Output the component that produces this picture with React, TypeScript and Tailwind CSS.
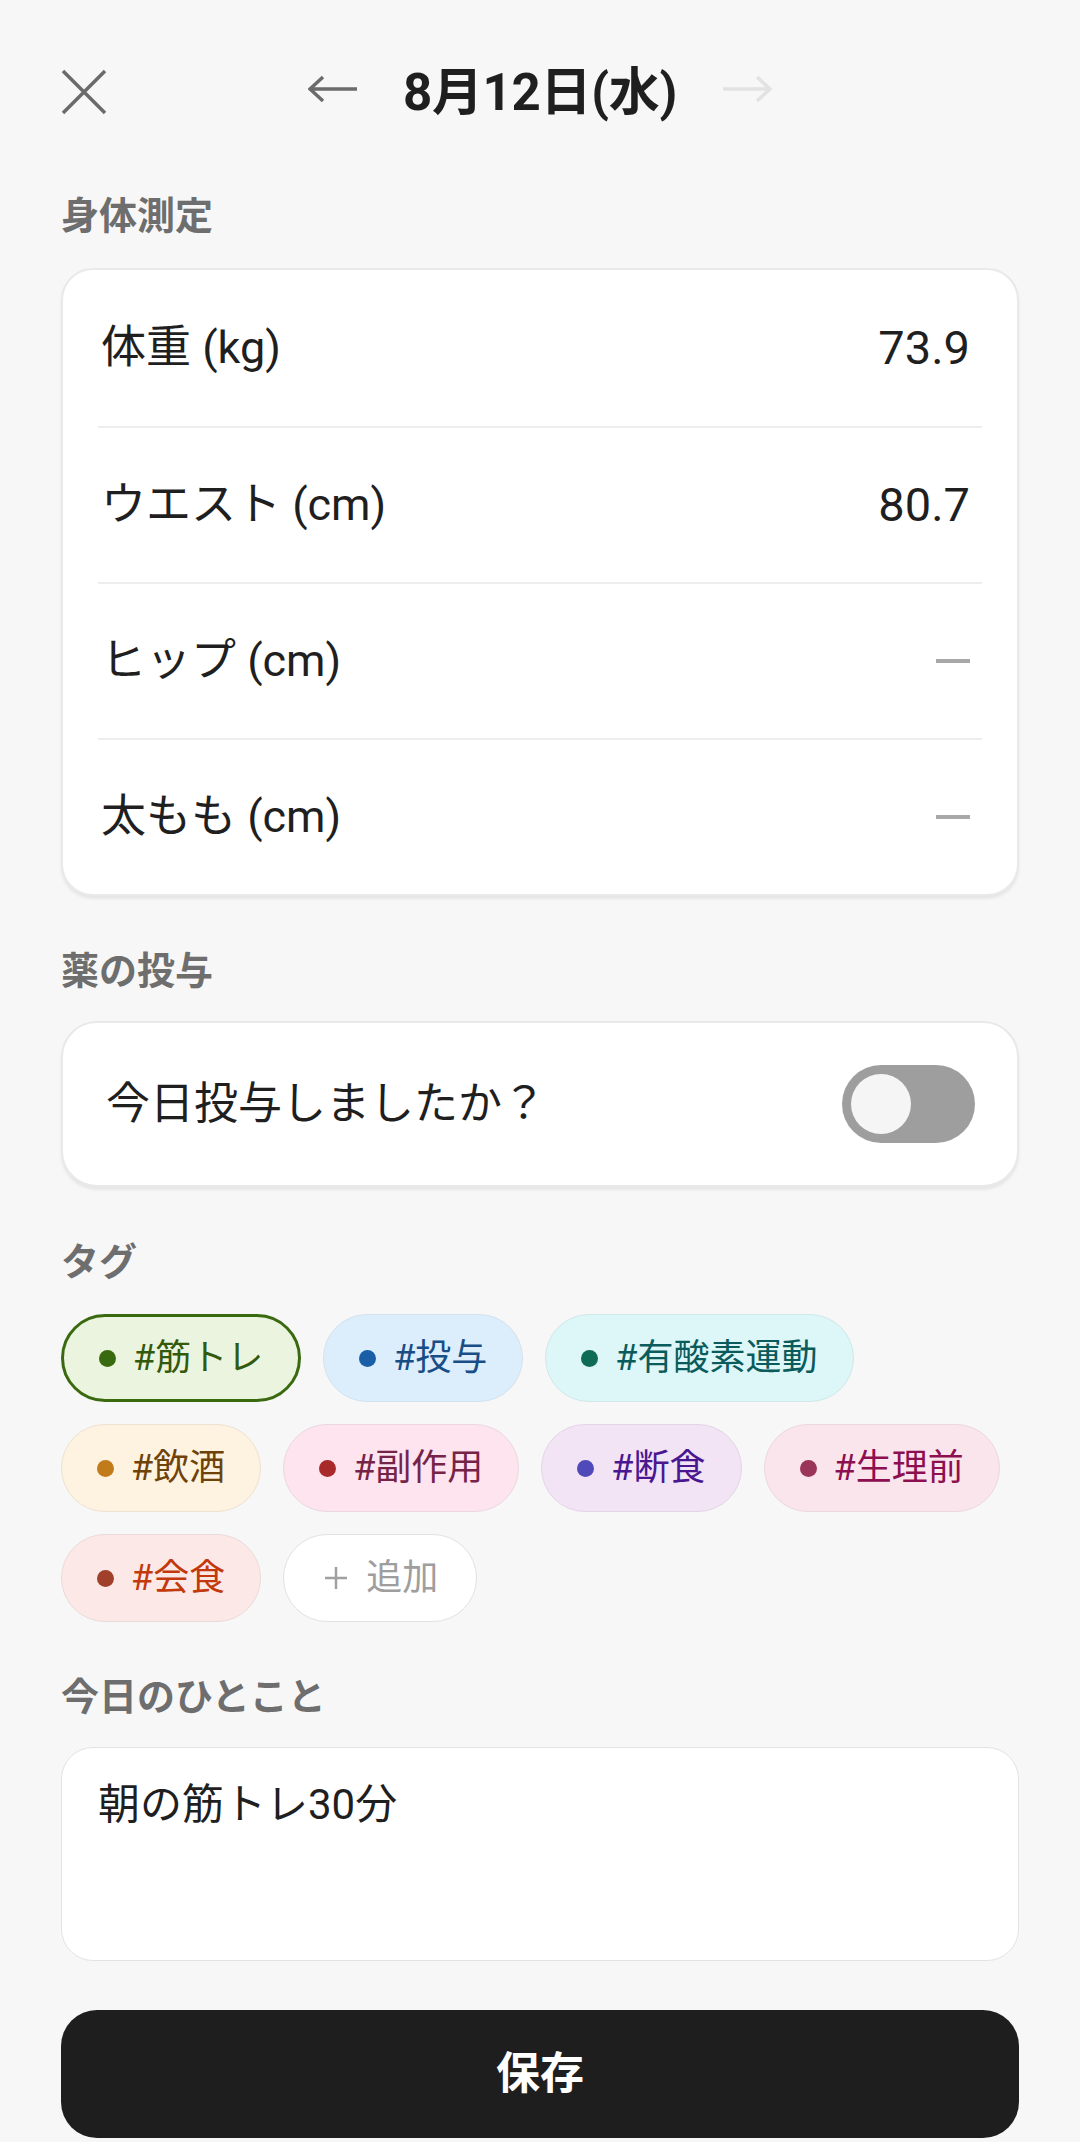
import { useState } from "react";

type Tag = {
  label: string;
  bg: string;
  border: string;
  dot: string;
  text: string;
  selected?: boolean;
};

const TAGS: Tag[] = [
  { label: "#筋トレ", bg: "bg-[#ebf4de]", border: "border-[#3a6a0f]", dot: "bg-[#3a6a0f]", text: "text-[#33590d]", selected: true },
  { label: "#投与", bg: "bg-[#dcedfb]", border: "border-[#d3e2ef]", dot: "bg-[#1a5ea8]", text: "text-[#184d86]" },
  { label: "#有酸素運動", bg: "bg-[#ddf6f7]", border: "border-[#d0e8e8]", dot: "bg-[#0e6b55]", text: "text-[#0a5b5b]" },
  { label: "#飲酒", bg: "bg-[#fef3e0]", border: "border-[#ede2cf]", dot: "bg-[#c27b1b]", text: "text-[#6e4209]" },
  { label: "#副作用", bg: "bg-[#fde4ee]", border: "border-[#ecd7df]", dot: "bg-[#a82a2a]", text: "text-[#762348]" },
  { label: "#断食", bg: "bg-[#f2e4f5]", border: "border-[#e2d5e5]", dot: "bg-[#5049b9]", text: "text-[#4a1790]" },
  { label: "#生理前", bg: "bg-[#fbe5ed]", border: "border-[#ebd7de]", dot: "bg-[#9b3459]", text: "text-[#8c0f50]" },
  { label: "#会食", bg: "bg-[#fce9e7]", border: "border-[#ebdad8]", dot: "bg-[#a0402b]", text: "text-[#c2390c]" },
];

const MEASUREMENTS = [
  { label: "体重 (kg)", value: "73.9" },
  { label: "ウエスト (cm)", value: "80.7" },
  { label: "ヒップ (cm)", value: null },
  { label: "太もも (cm)", value: null },
];

const SectionLabel = ({ children, className = "" }: { children: string; className?: string }) => (
  <div className={`h-[52px] leading-[52px] text-[38px] font-bold text-[#6e6e6e] ${className}`}>
    {children}
  </div>
);

export default function App() {
  const [taken, setTaken] = useState(false);

  return (
    <div className="min-h-screen bg-[#f7f7f7] font-[Roboto,'Noto_Sans_CJK_JP',sans-serif] text-[#1f1f1f]">
      <div className="px-[61px]">
        {/* header */}
        <header className="grid grid-cols-[1fr_auto_1fr] items-center h-[184px]">
          <button className="w-[46px] h-[46px] flex items-center justify-center">
            <svg width="46" height="46" viewBox="0 0 46 46" fill="none" stroke="#6b6b6b" strokeWidth="3.5">
              <path d="M2 2 L44 44 M44 2 L2 44" />
            </svg>
          </button>
          <div className="flex items-center gap-[45px]">
            <svg width="50" height="28" viewBox="0 0 50 28" fill="none" stroke="#6b6b6b" strokeWidth="3.5" className="-mt-[6px]">
              <path d="M2 14 H49 M15 2 L2 14 L15 26" />
            </svg>
            <div className="text-[51px] font-bold leading-none tracking-[-0.3px]">8月12日(水)</div>
            <svg width="50" height="28" viewBox="0 0 50 28" fill="none" stroke="#e2e2e2" strokeWidth="3.5" className="-mt-[6px]">
              <path d="M1 14 H48 M35 2 L48 14 L35 26" />
            </svg>
          </div>
          <div />
        </header>

        <SectionLabel className="mt-[6px]">身体測定</SectionLabel>
        <div className="mt-[26px] bg-white rounded-[32px] border-2 border-[#e9e9e9] shadow-[0_3px_3px_rgba(0,0,0,0.07)] px-[35px]">
          {MEASUREMENTS.map((m, i) => (
            <div
              key={m.label}
              className={`flex items-center justify-between h-[156px] pl-[3px] pr-[12px] ${i > 0 ? "border-t-2 border-[#eeeeee]" : ""}`}
            >
              <span className="text-[45px]">{m.label}</span>
              {m.value ? (
                <span className="text-[47px]">{m.value}</span>
              ) : (
                <span className="w-[34px] h-[4px] bg-[#a8a8a8]" />
              )}
            </div>
          ))}
        </div>

        <SectionLabel className="mt-[49px]">薬の投与</SectionLabel>
        <div className="mt-[24px] h-[166px] bg-white rounded-[36px] border-2 border-[#e9e9e9] shadow-[0_3px_3px_rgba(0,0,0,0.07)] flex items-center justify-between pl-[43px] pr-[42px]">
          <span className="text-[44px]">今日投与しましたか？</span>
          <button
            onClick={() => setTaken(!taken)}
            className={`w-[133px] h-[78px] rounded-full flex items-center px-[9px] ${taken ? "bg-[#1e1e1e] justify-end" : "bg-[#9e9e9e] justify-start"}`}
          >
            <span className="w-[60px] h-[60px] rounded-full bg-[#f5f5f5]" />
          </button>
        </div>

        <SectionLabel className="mt-[49px]">タグ</SectionLabel>
        <div className="mt-[26px] flex flex-wrap gap-[22px]">
          {TAGS.map((t) => (
            <div
              key={t.label}
              className={`h-[88px] rounded-full flex items-center gap-[17px] ${t.bg} ${t.border} ${t.selected ? "border-[3px] px-[35px]" : "border px-[35px]"}`}
            >
              <span className={`w-[17px] h-[17px] rounded-full ${t.dot}`} />
              <span className={`text-[36px] leading-none ${t.text}`}>{t.label}</span>
            </div>
          ))}
          <div className="h-[88px] rounded-full bg-white border border-[#e2e2e2] flex items-center gap-[19px] pl-[41px] pr-[38px]">
            <svg width="22" height="22" viewBox="0 0 22 22" fill="none" stroke="#a0a0a0" strokeWidth="2.5">
              <path d="M11 0 V22 M0 11 H22" />
            </svg>
            <span className="text-[36px] leading-none text-[#9e9e9e]">追加</span>
          </div>
        </div>

        <SectionLabel className="mt-[49px]">今日のひとこと</SectionLabel>
        <textarea
          defaultValue="朝の筋トレ30分"
          className="mt-[24px] block w-full h-[214px] bg-white rounded-[32px] border border-[#e3e3e3] px-[36px] pt-[28px] text-[42px] leading-[1.4] text-[#1f1f1f] resize-none outline-none"
        />

        <button className="mt-[49px] w-full h-[128px] rounded-[36px] bg-[#1e1e1e] text-white text-[44px] font-bold">
          保存
        </button>
      </div>
    </div>
  );
}
